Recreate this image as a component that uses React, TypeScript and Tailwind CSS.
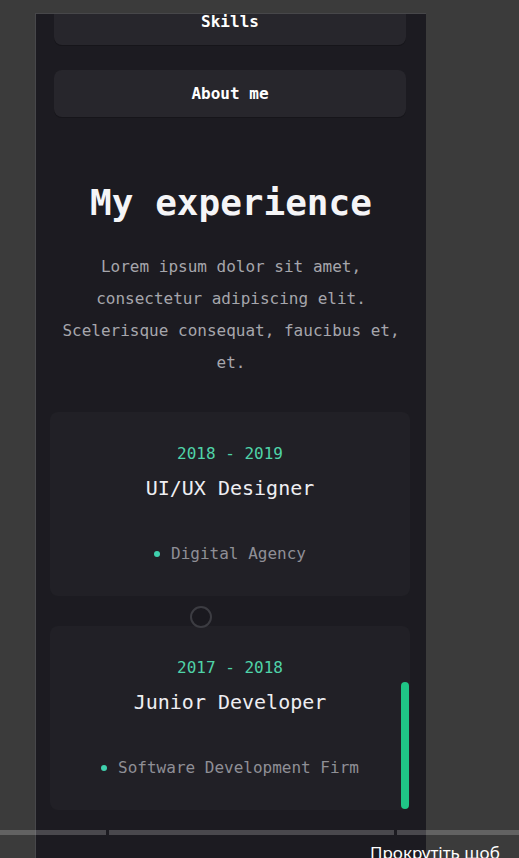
import { useState } from "react"

interface Job {
  period: string;
  title: string;
  company: string;
}

const jobs: Job[] = [
  { period: "2018 - 2019", title: "UI/UX Designer", company: "Digital Agency" },
  { period: "2017 - 2018", title: "Junior Developer", company: "Software Development Firm" },
]

const mono = "font-['DejaVu_Sans_Mono','Liberation_Mono',monospace]"

function NavButton({ label, className = "" }: { label: string; className?: string }) {
  return (
    <button
      className={`block h-[47px] w-full rounded-lg bg-[#27262c] text-[16px] font-bold text-white shadow-[0_1px_0_#16151a] ${className}`}
    >
      {label}
    </button>
  )
}

function JobCard({ job }: { job: Job }) {
  return (
    <div className="flex h-[184px] flex-col items-center rounded-lg bg-[#212026] pt-[30px] text-center">
      <div className="text-[16px] leading-6 text-[#4fd3a8]">{job.period}</div>
      <h3 className="mt-[8px] text-[20px] leading-7 text-[#eeeef2]">{job.title}</h3>
      <div className="mt-[40px] flex items-center gap-[11px] text-[16px] leading-6 text-[#8f8f96]">
        <span className="h-[6px] w-[6px] rounded-full bg-[#3fd0ad]" />
        {job.company}
      </div>
    </div>
  )
}

export default function App() {
  const [active] = useState(0)

  return (
    <div className="relative h-[858px] w-full overflow-hidden bg-[#3b3b3b]">
      {/* phone frame */}
      <div
        className={`ml-[35px] mt-[13px] h-[860px] w-[391px] overflow-hidden border-l border-t border-[#47474a] bg-[#1c1b21] ${mono}`}
      >
        <div className="pl-[18px] pr-[20px]">
          <NavButton label="Skills" className="mt-[-16px]" />
          <NavButton label="About me" className="mt-[25px]" />
        </div>

        <h2 className="mt-[66px] text-center text-[36px] font-bold leading-10 text-[#f5f5f7]">
          My experience
        </h2>
        <p className="mx-auto mt-[28px] w-[352px] text-center text-[16px] leading-8 text-[#a6a6ac]">
          Lorem ipsum dolor sit amet, consectetur adipiscing elit. Scelerisque consequat, faucibus et, et.
        </p>

        <div className="relative mt-[33px] flex flex-col gap-[30px] pl-[14px] pr-[16px]">
          {jobs.map(job => (
            <JobCard key={job.period} job={job} />
          ))}
          {/* timeline dot between cards */}
          <span
            className={`absolute left-[154px] top-[194px] h-[22px] w-[22px] rounded-full border-2 ${
              active === 0 ? "border-[#3c3c42]" : "border-[#4fd3a8]"
            } bg-[#1a191f]`}
          />
          {/* scroll indicator */}
          <span className="absolute left-[365px] top-[270px] h-[127px] w-[8px] rounded-full bg-[#1fc586]" />
        </div>
      </div>

      {/* video progress bar */}
      <div className="absolute left-0 right-0 top-[830px] flex h-[5px] gap-[3px]">
        <span className="w-[106px] bg-white/20" />
        <span className="w-[285px] bg-white/20" />
        <span className="flex-1 bg-white/20" />
      </div>
      <div className="absolute left-[370px] top-[841px] whitespace-nowrap font-['Noto_Sans','Liberation_Sans',sans-serif] text-[17px] leading-6 text-white">
        Прокрутіть щоб
      </div>
    </div>
  )
}
